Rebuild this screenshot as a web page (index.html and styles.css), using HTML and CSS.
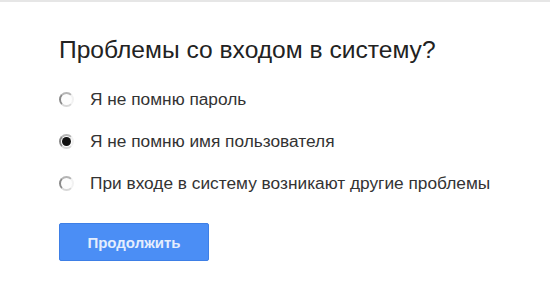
FILE: index.html
```html
<!DOCTYPE html>
<html lang="ru">

<head>
  <meta charset="UTF-8">
  <title>Проблемы со входом в систему?</title>
  <link rel="stylesheet" href="styles.css">
</head>

<body>
  <div class="container">
    <h1>Проблемы со входом в систему?</h1>

    <form class="options">
      <label class="option">
        <span class="radio"></span>
        Я не помню пароль
      </label>
      <label class="option">
        <span class="radio checked"></span>
        Я не помню имя пользователя
      </label>
      <label class="option">
        <span class="radio"></span>
        При входе в систему возникают другие проблемы
      </label>

      <button type="button" class="button">Продолжить</button>
    </form>
  </div>
</body>

</html>
```

FILE: styles.css
```css
body {
  font-family: Arial, "Liberation Sans", sans-serif;
  margin: 0;
  padding: 0;
  background-color: white;
  color: #333;
  border-top: 2px solid #e6e6e6;
}

.container {
  padding: 34px 0 0 59px;
}

h1 {
  font-size: 24.6px;
  font-weight: normal;
  color: #222;
  margin: 0 0 14px 0;
}

.options {
  display: flex;
  flex-direction: column;
  align-items: flex-start;
}

.option {
  display: flex;
  align-items: center;
  gap: 16px;
  font-size: 17.3px;
  color: #333;
  height: 42px;
}

.radio {
  width: 11px;
  height: 11px;
  border-radius: 50%;
  border: 2px solid #f2f2f2;
  border-left-color: #8a8a8a;
  border-top-color: #b5b5b5;
  border-bottom-color: #d8d8d8;
  background-color: #fdfdfd;
  position: relative;
}

.radio.checked::after {
  content: "";
  position: absolute;
  left: 1px;
  top: 1px;
  width: 9px;
  height: 9px;
  border-radius: 50%;
  background-color: #111;
}

.button {
  margin-top: 19px;
  width: 150px;
  height: 38px;
  background-color: #4b8ef5;
  border: 1px solid #3e7fe6;
  border-radius: 2px;
  color: #e4edfd;
  font-family: Arial, "Liberation Sans", sans-serif;
  font-size: 15px;
  font-weight: bold;
}
```
